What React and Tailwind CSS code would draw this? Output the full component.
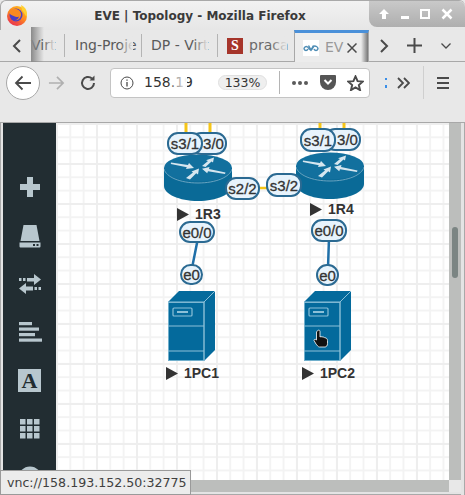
import React from "react";

const Sep = ({ c = "" }) => <div className={"w-px bg-[#b4b4b4] " + c} />;

function Firefox() {
  return (
    <svg width="22" height="22" viewBox="0 0 22 22" className="ml-[5px] mt-[3px]">
      <defs>
        <linearGradient id="ff" x1="0.900" y1="0" x2="0.300" y2="1">
          <stop offset="0" stopColor="#ffc21f" />
          <stop offset="0.500" stopColor="#ff8a1f" />
          <stop offset="1" stopColor="#e8304f" />
        </linearGradient>
      </defs>
      <circle cx="11" cy="12" r="10" fill="url(#ff)" />
      <path d="M15 1c3.500 1.500 6 5 6 9 0 1-.2 2-.5 3L16 6z" fill="#ffd030" />
      <circle cx="10" cy="11" r="6.500" fill="#4a3fc4" />
      <path d="M2.500 8C4 5 7.500 4 10.500 5c3 .8 5 3.500 4.500 6.500-.6 3-3.200 5-6 4.700 2.500-.4 4-2.200 3.700-3.800-1.200.9-3 .6-4.500-.2C6 11.500 3.500 10.500 2.500 8z" fill="#f98a20" />
      <path d="M3 14c1.500 3 4 4.500 7 4.500 2.500 0 4-1 5-2-2 3.500-9 4-12-2.500z" fill="#f03a55" />
    </svg>
  );
}

function EveIcon() {
  return (
    <div className="w-4 h-4 bg-white flex items-center justify-center">
      <svg width="16" height="10" viewBox="0 0 16 10" fill="none" stroke="#4f8db5" strokeWidth="1.500">
        <path d="M1 6c0-2 2-3 3.500-2s2 3 3.500 3 2-4 3.500-4 3.500 1 3.500 3" />
        <path d="M1 6c1 2 3 2 4 0M11 6c1 2 3 2 4 0M5.500 2.500 8 7l2.500-4.500" />
      </svg>
    </div>
  );
}

function Router() {
  return (
    <svg width="68" height="48" viewBox="0 0 68 48">
      <path d="M0 14v18c0 8 15 15 34 15s34-7 34-15V14z" fill="#0a6a97" />
      <ellipse cx="34" cy="14" rx="34" ry="13.500" fill="#12709e" />
      <path d="M0 15c2 8 16 14 34 14s32-6 34-14" fill="none" stroke="#7fb0c9" strokeWidth="0.800" />
      <g fill="#d6e6ef">
        <path d="M7 8.500l17 2.500 1-2 5 5-8 1 .8-1.800-16-3.200z" />
        <path d="M38 12l6-5-2-.8 8-2.700-1 5-1.500-1-6 5.500z" />
        <path d="M22 24l7-5.500-1.500-1 7.500-3-1 6-1.800-1.200L26 25.500z" />
        <path d="M61 20l-17-2.800-.8 2-5.200-4.500 7.500-1.700-.5 2 16.500 3.500z" />
      </g>
    </svg>
  );
}

function Pc() {
  return (
    <svg width="48" height="71" viewBox="0 0 48 71">
      <path d="M0 11 11 0h36v59L36 70H0z" fill="#046a9c" />
      <path d="M0 11h36v59M36 11 47 0M0 35h36M0 60h36" fill="none" stroke="#8cc0d8" strokeWidth="1" />
      <rect x="0.500" y="11.500" width="35.500" height="58" fill="none" stroke="#8cc0d8" strokeWidth="0.800" />
      <rect x="5" y="17" width="19" height="8" rx="1" fill="none" stroke="#8cc0d8" strokeWidth="1.200" />
      <rect x="9" y="20" width="11" height="2" fill="#8cc0d8" />
    </svg>
  );
}

const Pill = ({ className, children }) => (
  <div
    className={
      "absolute flex items-center justify-center rounded-[11px] border-[2.5px] border-[#2b6a92] bg-[#e7f3fc] text-[15px] leading-none text-[#333] [-webkit-text-stroke:0.3px_#333] font-['Liberation_Sans',sans-serif] " +
      className
    }
  >
    {children}
  </div>
);

const NodeLabel = ({ className, children }) => (
  <div className={"absolute flex items-center gap-[6px] text-[14px] leading-none font-bold text-[#333] font-['Liberation_Sans',sans-serif] " + className}>
    <svg width="12" height="13" viewBox="0 0 12 13"><path d="M0 0l12 6.500L0 13z" fill="#333" /></svg>
    {children}
  </div>
);

const Ic = ({ children, w = 24, h = 24 }) => (
  <div className="h-[48.4px] flex items-center justify-center shrink-0">
    <svg width={w} height={h} viewBox={`0 0 ${w} ${h}`} fill="#b8c7ce">{children}</svg>
  </div>
);

const Fade = ({ className }) => (
  <div className={"absolute top-0 bottom-0 bg-gradient-to-r from-transparent to-[#e8e8e8] " + className} />
);

export default function App() {
  return (
    <div className="relative w-[465px] h-[495px] overflow-hidden flex flex-col bg-[#e8e8e8] font-['DejaVu_Sans',sans-serif] text-[#4a4a4a]">
      {/* title bar */}
      <div className="h-[30px] shrink-0 flex rounded-t-[6px] bg-gradient-to-b from-[#f2f2f2] to-[#e6e6e6] border-t border-l border-[#a9a9a9]">
        <Firefox />
        <div className="flex-1 text-center pt-[6px] pl-[3px] text-[12px] font-bold text-[#3a3a3a] font-['DejaVu_Sans',sans-serif] whitespace-nowrap">
          EVE | Topology - Mozilla Firefox
        </div>
        <div className="w-[96px] h-[26px] rounded-bl-[8px] rounded-tr-[6px] bg-gradient-to-b from-[#c9c9c9] to-[#aeaeae] flex items-center text-white">
          <svg width="12" height="12" viewBox="0 0 12 12" fill="#fff" className="ml-[9px]"><path d="M6 1l5 5H8v5H4V6H1z" /></svg>
          <div className="ml-[11px] mt-[6px] w-[8px] h-[3px] bg-white" />
          <div className="ml-[11px] w-[10px] h-[10px] border-2 border-white" />
          <svg width="12" height="12" viewBox="0 0 12 12" stroke="#fff" strokeWidth="2.500" className="ml-[11px]"><path d="M1.500 1.500l9 9M10.500 1.500l-9 9" /></svg>
        </div>
      </div>

      {/* tab strip */}
      <div className="h-[32px] shrink-0 flex items-center border-b border-[#a8a8a8] text-[14px] whitespace-nowrap relative">
        <svg width="10" height="14" viewBox="0 0 10 14" fill="none" stroke="#4a4a4a" strokeWidth="2" className="ml-[12px] mr-[9px]"><path d="M8 1 2 7l6 6" /></svg>
        <div className="w-[23px] relative text-[#5a5a5a]">
          Virt
          <Fade className="left-[12px] w-[12px]" />
          <div className="absolute left-0 -top-[8px] -bottom-[6px] w-[13px] bg-gradient-to-r from-[#8a8a8a] to-transparent" />
        </div>
        <Sep c="h-[23px] ml-[10px]" />
        <div className="w-[57px] ml-[10px] relative text-[#5a5a5a]">
          Ing-Proje
          <Fade className="left-[44px] w-[14px]" />
        </div>
        <Sep c="h-[23px] ml-[9px]" />
        <div className="w-[56px] ml-[9px] relative text-[#5a5a5a]">
          DP - Virt
          <Fade className="left-[42px] w-[15px]" />
        </div>
        <Sep c="h-[23px] ml-[10px]" />
        <div className="w-4 h-4 ml-[9px] bg-[#a6352b] text-white font-bold text-[14px] leading-4 text-center font-['Liberation_Serif',serif]">S</div>
        <div className="ml-[6px] w-[36px] relative text-[#6a6a6a]">
          praca
          <Fade className="left-[22px] w-[16px]" />
        </div>
        <div className="ml-[9px] w-[75px] h-[32px] self-start flex items-center border-t-[3px] border-[#4a90d9] border-x border-x-[#a8a8a8] bg-[#ececec] pl-[8px] relative">
          <EveIcon />
          <span className="ml-[6px] w-[15px] text-[#999]">EV</span>
          <svg width="10" height="10" viewBox="0 0 10 10" stroke="#4a4a4a" strokeWidth="1.500" className="ml-[7px]"><path d="M.5.500l9 9M9.500.500l-9 9" /></svg>
          <div className="absolute right-0 top-0 bottom-0 w-[7px] bg-gradient-to-r from-transparent to-[#777]" />
        </div>
        <svg width="10" height="14" viewBox="0 0 10 14" fill="none" stroke="#4a4a4a" strokeWidth="2" className="ml-[10px]"><path d="M2 1l6 6-6 6" /></svg>
        <svg width="15" height="15" viewBox="0 0 15 15" stroke="#4a4a4a" strokeWidth="2" className="ml-[18px]"><path d="M7.500 0v15M0 7.500h15" /></svg>
        <svg width="10" height="6" viewBox="0 0 10 6" fill="none" stroke="#4a4a4a" strokeWidth="1.300" className="ml-[19px]"><path d="M.5.500 5 5 9.500.500" /></svg>
      </div>

      {/* nav bar */}
      <div className="h-[61px] shrink-0 border-b border-[#a8a8a8] relative">
        <div className="flex items-center h-[38px] pt-[3px]">
          <div className="ml-[6px] w-[34px] h-[34px] rounded-full bg-white border border-[#a8a8a8] flex items-center justify-center">
            <svg width="18" height="16" viewBox="0 0 18 16" fill="none" stroke="#4a4a4a" strokeWidth="1.800"><path d="M17 8H2M8.500 1.500 2 8l6.500 6.500" /></svg>
          </div>
          <svg width="17" height="16" viewBox="0 0 18 16" fill="none" stroke="#b0b0b0" strokeWidth="1.800" className="ml-[8px]"><path d="M1 8h15M9.500 1.500 16 8l-6.500 6.500" /></svg>
          <svg width="16" height="16" viewBox="0 0 16 16" fill="none" stroke="#4a4a4a" strokeWidth="2" className="ml-[15px]"><path d="M14 8a6 6 0 1 1-2-4.500" /><path d="M14.500 .500v5h-5z" fill="#4a4a4a" stroke="none" /></svg>
          <div className="ml-[14px] w-[260px] h-[30px] rounded-[4px] bg-white border border-[#c4c4c4] flex items-center relative">
            <svg width="14" height="14" viewBox="0 0 14 14" fill="none" stroke="#4a4a4a" className="ml-[9px]"><circle cx="7" cy="7" r="6" /><path d="M7 6v4.500M7 3.500v1.300" strokeWidth="1.300" /></svg>
            <span className="ml-[10px] w-[40px] text-[14px] text-[#333]">158.19</span>
            <div className="absolute left-[56px] w-[20px] top-0 bottom-0 bg-gradient-to-r from-transparent to-white" />
            <div className="ml-[34px] w-[49px] h-[15px] rounded-full bg-[#efefef] border border-[#e0e0e0] text-[12.500px] leading-[13px] text-center text-[#333]">133%</div>
            <Sep c="h-[23px] ml-[12px] bg-[#adadad]" />
            <svg width="16" height="4" viewBox="0 0 16 4" fill="#5a5a5a" className="ml-[12px]"><circle cx="2" cy="2" r="2" /><circle cx="8" cy="2" r="2" /><circle cx="14" cy="2" r="2" /></svg>
            <svg width="16" height="15" viewBox="0 0 16 15" className="ml-[12px]"><path d="M1 0h14a1 1 0 0 1 1 1v6a8 8 0 0 1-16 0V1a1 1 0 0 1 1-1z" fill="#555" /><path d="M4.500 5 8 8.500 11.500 5" fill="none" stroke="#fff" strokeWidth="2" /></svg>
            <svg width="17" height="16" viewBox="0 0 24 23" fill="none" stroke="#4a4a4a" strokeWidth="2.800" className="ml-[11px]"><path d="M12 2l3 6.800 7.400.7-5.600 4.900 1.700 7.300-6.500-3.900-6.500 3.900 1.700-7.300L1.600 9.500 9 8.800z" /></svg>
          </div>
          <div className="ml-[15px] flex flex-col gap-[5px]"><div className="w-[2px] h-[2px] bg-[#3b8fe8]" /><div className="w-[2px] h-[3px] bg-[#3b8fe8]" /></div>
          <svg width="13" height="12" viewBox="0 0 13 12" fill="none" stroke="#4a4a4a" strokeWidth="1.800" className="ml-[10px]"><path d="M1 1l5 5-5 5M7 1l5 5-5 5" /></svg>
          <Sep c="h-[33px] ml-[13px] bg-[#cfcfcf]" />
          <svg width="12" height="12" viewBox="0 0 12 12" stroke="#4a4a4a" strokeWidth="2" className="ml-[13px]"><path d="M0 1h12M0 6h12M0 11h12" /></svg>
        </div>
      </div>

      {/* content */}
      <div className="flex-1 min-h-0 flex">
        <div className="w-[3px] shrink-0 bg-[#e4e4e4] border-l border-[#a9a9a9]" />
        <div className="flex-1 min-w-0 flex flex-col">
          <div className="flex-1 min-h-0 flex">
            <div className="w-[53px] shrink-0 bg-[#222d32] pt-[40px] overflow-hidden flex flex-col">
              <Ic w={22} h={22}><path d="M8 1h6v7h7v6h-7v7H8v-7H1V8h7z" /></Ic>
              <Ic w={24} h={24}><path d="M5.500 1h13l3 16H2.500zM1.500 18.500h21v4a1 1 0 0 1-1 1h-19a1 1 0 0 1-1-1z" /><rect x="15" y="20" width="2" height="2" fill="#222d32" /><rect x="18.500" y="20" width="2" height="2" fill="#222d32" /></Ic>
              <Ic w={24} h={22}><path d="M1 5h2.500v3H1zM5 5h2.500v3H5zM9 5h7V1l7 5.500-7 5.500V8.500H9z" /><path d="M23 14h-2.500v3H23zM19 14h-2.500v3H19zM15 13.500H8V10l-7 5.500L8 21v-3.500h7z" /></Ic>
              <Ic w={24} h={22}><rect x="1" y="1" width="13" height="3.200" /><rect x="1" y="6.500" width="20" height="3.200" /><rect x="1" y="12" width="16" height="3.200" /><rect x="1" y="17.500" width="23" height="3.200" /></Ic>
              <div className="h-[48.4px] flex items-center justify-center shrink-0">
                <div className="w-[23px] h-[23px] bg-[#b8c7ce] text-[#222d32] font-bold text-[22px] leading-[23px] text-center font-['Liberation_Serif',serif]">A</div>
              </div>
              <Ic w={22} h={22}><rect x="1" y="1" width="5.500" height="5.500" /><rect x="8" y="1" width="5.500" height="5.500" /><rect x="15" y="1" width="5.500" height="5.500" /><rect x="1" y="8" width="5.500" height="5.500" /><rect x="8" y="8" width="5.500" height="5.500" /><rect x="15" y="8" width="5.500" height="5.500" /><rect x="1" y="15" width="5.500" height="5.500" /><rect x="8" y="15" width="5.500" height="5.500" /><rect x="15" y="15" width="5.500" height="5.500" /></Ic>
              <Ic w={24} h={24}><path d="M2.500 12a9.500 9.500 0 0 1 19 0" fill="none" stroke="#b8c7ce" strokeWidth="4" /></Ic>
            </div>

            {/* canvas, coordinates relative to (56,123) */}
            <div className="flex-1 min-w-0 relative overflow-hidden bg-white bg-[linear-gradient(#eeeeee_2px,transparent_2px),linear-gradient(90deg,#eeeeee_2px,transparent_2px),linear-gradient(#f3f3f3_2px,transparent_2px),linear-gradient(90deg,#f3f3f3_2px,transparent_2px)] bg-[size:40px_40px,40px_40px,13.33px_13.33px,13.33px_13.33px]">
              <svg width="393" height="357" className="absolute left-0 top-0">
                <g stroke="#f5c518" strokeWidth="3" fill="none">
                  <path d="M130 0v12M154 0v12M264 0v10M288 0v10" />
                  <path d="M200 65h14" strokeWidth="2.500" />
                </g>
                <g stroke="#1f6fa8" strokeWidth="2.500" fill="none">
                  <path d="M142 115 136 145M273 115 272 145" />
                </g>
              </svg>
              <div className="absolute left-[108px] top-[31px]"><Router /></div>
              <div className="absolute left-[240px] top-[29px]"><Router /></div>
              <div className="absolute left-[112px] top-[168px]"><Pc /></div>
              <div className="absolute left-[248px] top-[168px]"><Pc /></div>

              <Pill className="left-[134px] top-[9px] w-[37px] h-[23px] pl-[10px]">3/0</Pill>
              <Pill className="left-[111px] top-[9px] w-[36px] h-[23px]">s3/1</Pill>
              <Pill className="left-[268px] top-[5px] w-[37px] h-[23px] pl-[10px]">3/0</Pill>
              <Pill className="left-[244px] top-[5px] w-[36px] h-[24px]">s3/1</Pill>
              <Pill className="left-[169px] top-[54px] w-[35px] h-[23px]">s2/2</Pill>
              <Pill className="left-[210px] top-[50px] w-[36px] h-[24px]">s3/2</Pill>
              <Pill className="left-[123px] top-[98px] w-[36px] h-[22px]">e0/0</Pill>
              <Pill className="left-[255px] top-[96px] w-[36px] h-[23px]">e0/0</Pill>
              <Pill className="left-[124px] top-[141px] w-[23px] h-[21px] rounded-full">e0</Pill>
              <Pill className="left-[260px] top-[141px] w-[23px] h-[22px] rounded-full">e0</Pill>

              <NodeLabel className="left-[121px] top-[84px]">1R3</NodeLabel>
              <NodeLabel className="left-[254px] top-[79px]">1R4</NodeLabel>
              <NodeLabel className="left-[110px] top-[243px]">1PC1</NodeLabel>
              <NodeLabel className="left-[246px] top-[243px]">1PC2</NodeLabel>

              <svg width="16" height="20" viewBox="0 0 16 20" className="absolute left-[257px] top-[206px]">
                <path d="M5 1.500c1-1 2 0 2 1V8l1-.5 1 .5 1-.2 1.500.8 1.500.4c1 .5 1.500 1.500 1.500 2.500v3c0 2-1 3.500-2.500 3.500H6.500C5 18 4 16 3 15L1 11.500c0-1.500 1.500-1.500 2.500-.5V3c0-.5.5-1 1.500-1.500z" fill="#111" stroke="#fff" strokeWidth="0.800" />
              </svg>
            </div>

            {/* vertical scrollbar */}
            <div className="w-[12px] shrink-0 bg-[#bcbebc] pt-[104px] flex justify-center">
              <div className="w-[6px] h-[51px] rounded-full bg-[#7b8583]" />
            </div>
          </div>
          <div className="h-[12px] shrink-0 flex">
            <div className="flex-1 bg-[#bcbebc]" />
            <div className="w-[12px] bg-[#e8e8e8]" />
          </div>
          <div className="h-[3px] shrink-0 bg-[#e4e4e4] border-b border-[#a9a9a9]" />
        </div>
        <div className="w-[4px] shrink-0 bg-[#e4e4e4] border-r border-[#a9a9a9]" />
      </div>

      {/* status overlay */}
      <div className="absolute left-0 bottom-0 w-[191px] h-[25px] pl-[6px] bg-[#ececec] border border-[#9a9a9a] text-[12.600px] leading-[23px] text-[#404040] whitespace-nowrap">
        vnc://158.193.152.50:32775
      </div>
    </div>
  );
}
